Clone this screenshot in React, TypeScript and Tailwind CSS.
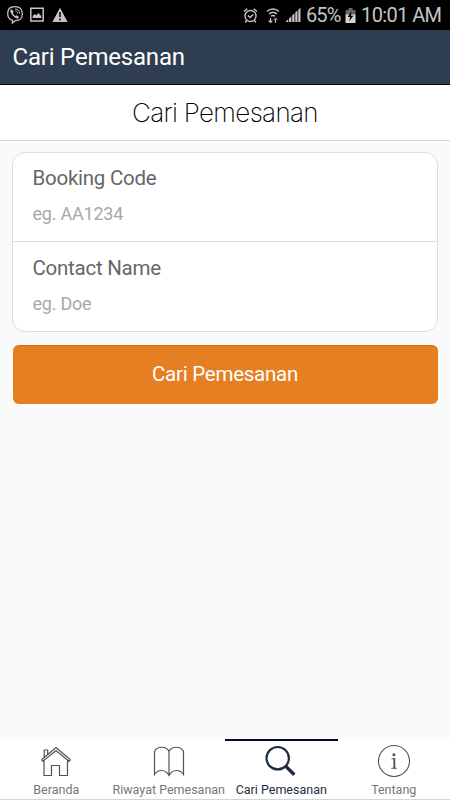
import React from "react";

function StatusBar() {
  return (
    <div className="flex h-[30px] items-center justify-between bg-black pr-[9px] pl-[6px] text-[#c4c4c4]">
      <div className="flex items-center">
        <svg width="18" height="20" viewBox="0 0 18 20" fill="none" stroke="currentColor">
          <path d="M9 1.700c5.200 0 7.300 2 7.300 7s-2 6.800-7 6.900L6.400 18v-2.800C3 14.400 1.700 12.700 1.700 8.700c0-5 2-7 7.300-7Z" strokeWidth="1.300" />
          <path d="M5.300 4.500 4.200 5.600c.3 3.500 3.700 7.200 7.400 8.100l1.500-1.600-2.300-1.800-1.200.8C8.300 10.400 7.300 9.200 6.900 8l.8-1.100-1.400-2.400Z" fill="currentColor" stroke="none" />
          <path d="M9 4c3 0 4.700 1.600 4.700 4.700M9.300 6c1.700.1 2.400 1 2.500 2.500" strokeWidth="1" />
        </svg>
        <svg className="ml-[6px]" width="14" height="16" viewBox="0 0 14 16">
          <path d="M.8 1.300h12.400v12.600H.8z" fill="none" stroke="currentColor" strokeWidth="1.500" />
          <path d="M2.700 11V9l2-2 1.600 1.500L8.200 6l3.100 3v2Z" fill="currentColor" />
        </svg>
        <svg className="ml-[8px]" width="16" height="16" viewBox="0 0 16 16">
          <path d="M8 .8 15.600 15H.4Z" fill="currentColor" />
          <path d="M8 5v5M8 11.500v2" stroke="#000" strokeWidth="1.500" />
        </svg>
      </div>
      <div className="flex items-center">
        <svg width="15" height="17" viewBox="0 0 15 17" fill="none" stroke="currentColor" strokeWidth="1.400">
          <circle cx="7.500" cy="9" r="5.500" />
          <path d="M1 4.500 4.300 1.800M14 4.500l-3.300-2.700M3.500 13.500l-1.300 2M11.500 13.500l1.300 2M4.800 8.500l2.200 2 3.300-3" />
        </svg>
        <svg className="ml-[8px]" width="14" height="17" viewBox="0 0 14 17" fill="none" stroke="currentColor" strokeWidth="1.400">
          <path d="M1 4.500c3.500-3.300 8.500-3.300 12 0M3 7c2.500-2.200 5.500-2.200 8 0M5 9.300c1.400-1 2.600-1 4 0" />
          <path d="M4.500 11v4.500M2.700 13.700l1.800 1.800 1.800-1.800M9.500 15.800v-4.500" strokeWidth="1.200" />
          <path d="m7.700 13 1.800-1.800 1.800 1.800" stroke="#777" />
        </svg>
        <svg className="ml-[5px]" width="16" height="16" viewBox="0 0 16 16" fill="currentColor">
          <path d="M.3 15 3.200 12.300V15ZM4 11.500l2.400-2.200V15H4ZM7.200 8.500l2.300-2.200V15H7.200ZM10.300 5.500l2.200-2V15h-2.200ZM13.300 2.700l2.200-2V15h-2.200Z" />
        </svg>
        <span className="ml-[5px] w-[36px] pt-[1px] text-[20px] leading-[29px] tracking-[-0.9px] whitespace-nowrap">65%</span>
        <svg className="ml-[3px]" width="11" height="17" viewBox="0 0 11 17">
          <path d="M3.500 1h4v2H3.500zM.5 3h10v5H.5z" fill="#666" />
          <path d="M.5 7.500h10V16H.5z" fill="#d4d4d4" />
          <path d="M6.500 4 2.700 10h2.500L4 14.500 8.400 8.700H6Z" fill="#000" />
        </svg>
        <span className="ml-[5px] w-[80px] pt-[1px] text-[20px] leading-[29px] tracking-[-0.6px] whitespace-nowrap">10:01 AM</span>
      </div>
    </div>
  );
}

function Field({ label, placeholder }: { label: string; placeholder: string }) {
  return (
    <label className="flex flex-col px-[19.500px] pt-[11px] last:pt-[12px]">
      <span className="text-[20.500px] leading-[28px] text-[#666] tracking-[-0.25px]">{label}</span>
      <input
        className="mt-[8px] h-[28px] w-full bg-transparent text-[18px] leading-[28px] outline-none placeholder:text-[#a8a8a8] tracking-[-0.22px]"
        placeholder={placeholder}
      />
    </label>
  );
}

function HomeIcon() {
  return (
    <svg width="34" height="34" viewBox="0 0 34 34" fill="none" stroke="#525254" strokeWidth="1.200">
      <path d="M5 16.500v15h7.500v-10h8v10h8v-15M2.500 15.700 17 3.500l14.500 12.200M2.500 15.700l1.300 1.400L17 6.500l13 10.600 1.500-1.400M5.200 13V6h3.500v4.200" />
    </svg>
  );
}

function BookIcon() {
  return (
    <svg width="34" height="34" viewBox="0 0 34 34" fill="none" stroke="#525254" strokeWidth="1.200">
      <path d="M17 7.500C14.500 1.800 5 1.800 2.500 7.500V30.500c3.500-5.500 11-5.500 14.500 1 3.500-6.500 11-6.500 14.500-1V7.500C29 1.800 19.500 1.800 17 7.500ZM17 7.500v24" />
    </svg>
  );
}

function SearchIcon() {
  return (
    <svg width="34" height="34" viewBox="0 0 34 34" fill="none" stroke="#1e2d40">
      <circle cx="13.700" cy="14.200" r="11.200" strokeWidth="2.200" />
      <path d="m21.500 22 8.800 8.800" strokeWidth="3.400" />
    </svg>
  );
}

function InfoIcon() {
  return (
    <svg width="34" height="34" viewBox="0 0 34 34" fill="none" stroke="#525254">
      <circle cx="17" cy="17" r="15.500" strokeWidth="1.100" />
      <circle cx="16.900" cy="10.800" r="1.500" fill="#525254" stroke="none" />
      <path d="M14.500 14.700h3v9.400M14.300 24.300h5.500" strokeWidth="1.100" />
      <path d="M17.300 14.500v10" strokeWidth="1.800" />
    </svg>
  );
}

function Tab({ label, active, children }: { label: string; active?: boolean; children: React.ReactNode }) {
  return (
    <div
      className={
        active
          ? "flex w-1/4 flex-col items-center border-t-2 border-[#080630] text-[#1e2d40]"
          : "flex w-1/4 flex-col items-center border-t-2 border-transparent text-[#777]"
      }
    >
      <div className="mt-[3px] h-[34px]">{children}</div>
      <span className="mt-[3px] text-[12.500px] leading-[17px] whitespace-nowrap">{label}</span>
    </div>
  );
}

export default function App() {
  return (
    <div className="flex h-[800px] w-[450px] flex-col overflow-hidden bg-[#fafafa] font-['Roboto',sans-serif]">
      <StatusBar />
      <header className="flex h-[55px] items-center border-b border-black bg-[#2e3e50] pl-[12.500px]">
        <span className="text-[24px] leading-[30px] tracking-[-0.2px] text-white">Cari Pemesanan</span>
      </header>
      <div className="flex h-[56px] items-center justify-center border-b border-[#d8d8d8] bg-white pt-[1px]">
        <h1 className="font-['Inter',sans-serif] text-[26px] leading-[34px] font-extralight tracking-[-0.65px] text-black">Cari Pemesanan</h1>
      </div>
      <main className="flex-1 px-[12px] pt-[11px]">
        <div className="grid h-[180px] grid-rows-[89px_89px] divide-y divide-[#dedede] rounded-[13px] border border-[#dedede] bg-white">
          <Field label="Booking Code" placeholder="eg. AA1234" />
          <Field label="Contact Name" placeholder="eg. Doe" />
        </div>
        <button className="mx-[0.500px] mt-[13px] block h-[59px] w-[425px] rounded-[6px] border-t border-[#d8690d] bg-[#e57f22] pb-[1px] text-[20.500px] tracking-[-0.25px] text-white">
          Cari Pemesanan
        </button>
      </main>
      <nav className="flex h-[61px] border-b border-[#d5d5d5] bg-white">
        <Tab label="Beranda"><HomeIcon /></Tab>
        <Tab label="Riwayat Pemesanan"><BookIcon /></Tab>
        <Tab label="Cari Pemesanan" active><SearchIcon /></Tab>
        <Tab label="Tentang"><InfoIcon /></Tab>
      </nav>
    </div>
  );
}
